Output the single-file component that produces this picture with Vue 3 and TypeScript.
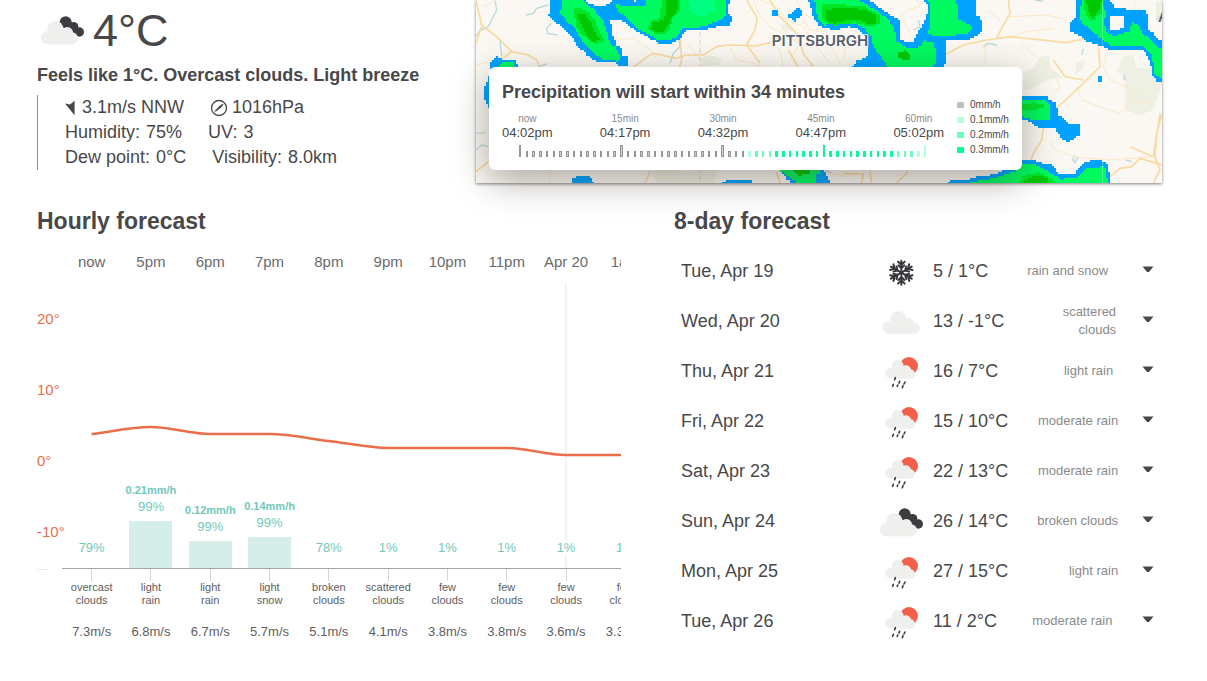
<script setup lang="ts">
type Point = [number, number]
type DayIcon = 'snow' | 'scattered' | 'rain' | 'broken'

interface Hour {
  label: string
  temp: number
  chance: string
  amount?: string
  bar?: number
  sky: [string, string]
  wind: string
}

interface Day {
  date: string
  icon: DayIcon
  temp: string
  sky: string
}

const hours: Hour[] = [
  { label: 'now', temp: 4, chance: '79%', sky: ['overcast', 'clouds'], wind: '7.3m/s' },
  { label: '5pm', temp: 5, chance: '99%', amount: '0.21mm/h', bar: 47, sky: ['light', 'rain'], wind: '6.8m/s' },
  { label: '6pm', temp: 4, chance: '99%', amount: '0.12mm/h', bar: 27, sky: ['light', 'rain'], wind: '6.7m/s' },
  { label: '7pm', temp: 4, chance: '99%', amount: '0.14mm/h', bar: 31, sky: ['light', 'snow'], wind: '5.7m/s' },
  { label: '8pm', temp: 3, chance: '78%', sky: ['broken', 'clouds'], wind: '5.1m/s' },
  { label: '9pm', temp: 2, chance: '1%', sky: ['scattered', 'clouds'], wind: '4.1m/s' },
  { label: '10pm', temp: 2, chance: '1%', sky: ['few', 'clouds'], wind: '3.8m/s' },
  { label: '11pm', temp: 2, chance: '1%', sky: ['few', 'clouds'], wind: '3.8m/s' },
  { label: 'Apr 20', temp: 1, chance: '1%', sky: ['few', 'clouds'], wind: '3.6m/s' },
  { label: '1am', temp: 1, chance: '1%', sky: ['few', 'clouds'], wind: '3.3m/s' },
]

const days: Day[] = [
  { date: 'Tue, Apr 19', icon: 'snow', temp: '5 / 1°C', sky: 'rain and snow' },
  { date: 'Wed, Apr 20', icon: 'scattered', temp: '13 / -1°C', sky: 'scattered clouds' },
  { date: 'Thu, Apr 21', icon: 'rain', temp: '16 / 7°C', sky: 'light rain' },
  { date: 'Fri, Apr 22', icon: 'rain', temp: '15 / 10°C', sky: 'moderate rain' },
  { date: 'Sat, Apr 23', icon: 'rain', temp: '22 / 13°C', sky: 'moderate rain' },
  { date: 'Sun, Apr 24', icon: 'broken', temp: '26 / 14°C', sky: 'broken clouds' },
  { date: 'Mon, Apr 25', icon: 'rain', temp: '27 / 15°C', sky: 'light rain' },
  { date: 'Tue, Apr 26', icon: 'rain', temp: '11 / 2°C', sky: 'moderate rain' },
]

const axis = ['20°', '10°', '0°', '-10°']

const marks = [
  { offset: 'now', time: '04:02pm' },
  { offset: '15min', time: '04:17pm' },
  { offset: '30min', time: '04:32pm' },
  { offset: '45min', time: '04:47pm' },
  { offset: '60min', time: '05:02pm' },
]

const legend = [
  { level: 'l0', text: '0mm/h' },
  { level: 'l1', text: '0.1mm/h' },
  { level: 'l2', text: '0.2mm/h' },
  { level: 'l3', text: '0.3mm/h' },
]

// Smooth temperature curve; the tangent is flat at plateaus and turning points.
const column = 60
const points: Point[] = hours.map((h, i) => [column * i + column / 2, 178 - h.temp * 7])
const slopes = points.map((p, i) => {
  const before = points[i - 1]
  const after = points[i + 1]
  if (!before) return (after[1] - p[1]) / column
  if (!after) return 0
  const a = (p[1] - before[1]) / column
  const b = (after[1] - p[1]) / column
  return a * b <= 0 ? 0 : (a + b) / 2
})
const curve = points
  .map((p, i) => {
    if (i === 0) return `M${p[0]},${p[1]}`
    const q = points[i - 1]
    const third = column / 3
    return `C${q[0] + third},${q[1] + slopes[i - 1] * third} ${p[0] - third},${p[1] - slopes[i] * third} ${p[0]},${p[1]}`
  })
  .join('')

// One bar a minute, laid out in runs of four that cover 27 units.
const bars = Array.from({ length: 61 }, (_, i) => {
  const tall = i % 15 === 0
  let level = 'l3'
  if (i < 34) level = 'l0'
  else if (i === 34 || i > 58) level = 'l1'
  else if (i < 38 || i > 55) level = 'l2'
  const width = i % 4 < 2 ? 2 : 3
  return {
    x: 17 + 27 * Math.floor(i / 4) + [0, 7, 13, 20][i % 4],
    y: tall ? 0 : 6,
    width,
    height: tall ? 12 : 6,
    level,
    hollow: i < 34 && width === 3,
  }
})

// Turns an outline into a stepped one, on the radar's square cells.
function cells(text: string): string {
  const size = 6
  const snap = (n: number) => Math.round(n / size) * size
  const pts = text.split(' ').map((s) => s.split(',').map(Number) as Point)
  let out = ''
  pts.forEach((p, i) => {
    const next = pts[(i + 1) % pts.length]
    const n = Math.max(1, Math.ceil(Math.max(Math.abs(next[0] - p[0]), Math.abs(next[1] - p[1])) / size))
    for (let k = 0; k < n; k++) {
      const x = snap(p[0] + ((next[0] - p[0]) * k) / n)
      const y = snap(p[1] + ((next[1] - p[1]) * k) / n)
      out += out ? `H${x}V${y}` : `M${x},${y}`
    }
  })
  return out + 'Z'
}

const west = [
  { tone: 'blue', d: '242,-6 240,30 236,45 245,62 270,75 285,95 305,110 315,130 330,148 345,160 365,180 385,185 415,185 445,190 445,197 472,197 472,170 455,165 455,145 440,130 428,100 422,58 440,58 465,70 490,90 510,100 540,118 565,130 600,130 625,118 645,92 700,90 745,78 780,75 785,45 775,35 778,-6 525,-6 500,4 465,-6 430,-6 428,8 410,18 385,20 360,10 345,-6' },
  { tone: 'green', d: '278,-6 272,40 290,68 315,85 325,110 345,135 370,160 395,178 420,180 445,187 450,165 440,145 420,125 410,90 400,60 380,35 365,22 335,-6' },
  { tone: 'green', d: '435,12 470,18 530,15 530,-6 765,-6 768,50 745,65 700,80 640,85 625,105 600,122 570,120 545,108 510,88 475,55 450,35' },
  { tone: 'mint', d: '650,-6 730,-6 735,30 700,50 670,40' },
  { tone: 'mid', d: '310,25 345,28 375,65 388,95 403,125 375,132 340,105 320,75' },
  { tone: 'dark', d: '320,42 340,42 365,72 372,95 388,120 372,126 350,105 338,75' },
  { tone: 'mid', d: '575,-6 633,-6 628,38 608,60 595,98 560,104 535,85 540,64 570,55' },
  { tone: 'dark', d: '590,-6 628,-6 620,35 605,52 588,92 565,98 542,85 545,68 578,60 590,40' },
  { tone: 'blue', d: '62,185 80,170 95,178 125,178 145,195 145,215 62,215' },
  { tone: 'green', d: '72,208 95,188 125,188 142,208' },
  { tone: 'blue', d: '60,228 52,235 50,260 44,262 44,300 50,305 52,325 60,325' },
  { tone: 'blue', d: '300,560 305,535 320,528 355,530 375,560' },
  { tone: 'blue', d: '750,560 755,545 780,537 840,537 848,560' },
  { tone: 'blue', d: '900,505 925,512 940,530 960,545 965,560 1090,560 1060,505' },
  { tone: 'green', d: '915,505 945,525 975,545 980,560 1056,560 1050,505' },
  { tone: 'dark', d: '965,505 1020,505 1020,520 990,528' },
  { tone: 'blue', d: '905,27 922,27 922,48 905,48' },
  { tone: 'blue', d: '955,42 970,35 980,22 995,30 998,50 975,63 955,50' },
].map((s) => ({ tone: s.tone, d: cells(s.d) }))

const east = [
  { tone: 'blue', d: '-38,-6 -25,30 -20,55 -5,75 10,85 50,90 85,80 110,85 140,115 145,145 140,172 110,185 95,210 370,210 375,185 375,120 440,120 470,108 485,90 485,60 470,40 470,-6 305,-6 325,20 318,60 300,90 280,125 240,122 238,60 215,45 165,12 140,-6' },
  { tone: 'green', d: '-18,-6 -12,30 -5,60 10,75 100,70 130,85 155,110 160,145 185,175 205,210 325,210 345,185 350,160 340,125 315,122 305,140 270,145 230,122 220,75 200,50 160,25 110,-6' },
  { tone: 'mid', d: '5,14 40,12 130,20 180,45 180,72 150,80 110,68 50,76 10,65' },
  { tone: 'dark', d: '18,30 40,24 130,28 165,48 170,68 150,74 120,60 80,62 50,70 20,60' },
  { tone: 'dark', d: '232,155 250,152 268,168 268,178 232,176' },
  { tone: 'green', d: '325,-6 332,40 330,90 318,98 335,108 400,105 440,100 458,85 450,72 415,55 410,-6' },
  { tone: 'blue', d: '770,-6 765,55 752,70 752,95 775,105 800,125 845,140 870,150 920,148 965,152 985,175 992,200 1000,235 1010,243 1032,243 1032,125 1005,110 1000,95 985,90 980,30 885,25 870,-6' },
  { tone: 'green', d: '785,-6 780,55 790,75 820,100 870,135 960,135 995,165 1005,225 1032,235 1032,150 1000,125 965,95 955,70 935,68 930,95 890,108 860,95 850,60 860,40 850,15 855,-6' },
  { tone: 'land', d: '870,45 915,45 912,85 885,92 870,88' },
  { tone: 'mid', d: '790,-6 855,-6 845,40 820,62 798,45' },
  { tone: 'dark', d: '797,-6 845,-6 840,30 820,52 805,30' },
  { tone: 'blue', d: '832,228 848,228 848,243 832,243' },
  { tone: 'blue', d: '590,288 680,290 685,300 710,310 712,345 735,368 780,375 778,405 750,425 725,415 705,385 660,382 630,365 590,350' },
  { tone: 'green', d: '590,298 675,302 690,315 690,360 645,362 590,340' },
  { tone: 'mid', d: '600,312 640,308 670,316 670,326 600,330' },
  { tone: 'blue', d: '382,560 382,543 440,540 470,530 530,522 560,505 580,478 640,480 665,490 690,490 715,520 760,520 785,490 820,478 850,485 865,495 870,560' },
  { tone: 'green', d: '440,560 450,545 500,540 580,515 606,490 650,495 690,520 720,538 770,532 800,505 845,500 860,515 862,560' },
  { tone: 'mid', d: '590,560 610,525 655,518 700,540 710,560' },
  { tone: 'dark', d: '605,560 612,540 640,528 680,532 685,560' },
  { tone: 'blue', d: '-10,520 5,525 12,545 15,560 -10,560' },
].map((s) => ({ tone: s.tone, d: cells(s.d) }))
</script>

<template>
  <main class="page">
    <section class="top">
      <div class="current">
        <div class="current-temp">
          <svg class="icon" viewBox="0 0 150 150" aria-hidden="true">
            <g class="cloud-dark">
              <circle cx="86" cy="55" r="18" />
              <circle cx="110" cy="68" r="14" />
              <circle cx="127" cy="84" r="14" />
              <path d="M84 46 104 56 120 70 134 90 122 97 94 90Z" />
            </g>
            <g class="cloud-light">
              <circle cx="55" cy="75" r="24" />
              <circle cx="32" cy="101" r="20" />
              <circle cx="91" cy="86" r="17" />
              <circle cx="105" cy="103" r="18" />
              <path d="M32 84H106V121H32Z" />
            </g>
          </svg>
          <h1>4°C</h1>
        </div>
        <p class="feels">Feels like 1°C. Overcast clouds. Light breeze</p>
        <div class="facts">
          <div class="fact-row">
            <span class="fact">
              <svg class="wind-icon" viewBox="0 0 13 16" aria-hidden="true"><path d="M0 3.5 5 4.6 9.6 .8V15.2Z" /></svg>
              3.1m/s NNW
            </span>
            <span class="fact">
              <svg class="gauge-icon" viewBox="0 0 18 18" aria-hidden="true">
                <circle cx="9" cy="9" r="7.5" />
                <path d="M4.2 12.4 9.6 6.8 12.6 4.8 13.4 5.6 11.2 8.6 6 12.6Z" />
              </svg>
              1016hPa
            </span>
          </div>
          <div class="fact-row">
            <span class="fact"><span class="term">Humidity:</span>75%</span>
            <span class="fact"><span class="term">UV:</span>3</span>
          </div>
          <div class="fact-row">
            <span class="fact"><span class="term">Dew point:</span>0°C</span>
            <span class="fact"><span class="term">Visibility:</span>8.0km</span>
          </div>
        </div>
      </div>

      <div class="map">
        <svg class="map-art" viewBox="0 0 686 183" preserveAspectRatio="xMidYMid slice" role="img" aria-label="Precipitation map around Pittsburgh">
          <rect class="land" width="686" height="183" />
          <g transform="translate(-6 0) scale(.33333)">
            <path class="wood" d="M690 175 720 165 755 175 750 195 700 197ZM540 515 590 505 650 515 740 510 735 549 560 549ZM930 75 960 70 970 90 940 95Z" />
            <path class="water" d="M75 0 80 30 60 70 50 85 30 90 18 110M235 15 200 25 190 40 168 45M245 70 230 85 232 100 262 105M205 200 230 192M625 110 630 140 610 160 600 190M18 400 45 398M18 450 35 435 55 440M90 120 95 170" />
            <path class="minor" d="M18 195 60 185 125 155M40 20 60 10 80 0M420 110 460 118 490 115 540 150 560 175M650 130 680 165 700 200M780 140 800 180 850 190 870 200M850 0 870 50 900 80 960 110 1000 150M1000 60 1020 90 1060 95M905 130 930 150 940 200M980 0 1000 40 1050 70 1080 110M870 0 920 20 950 60 1000 80 1040 140 1080 190M940 100 990 130 960 180M240 510 240 549M850 20 830 40" />
            <path class="major" d="M18 0 35 75 80 110 125 155 175 165 200 180 210 205M18 130 35 80M125 155 60 205M490 203 525 175 550 160 620 175 650 165 700 165 740 140 780 135 860 138 900 128M630 95 635 180 628 205M830 0 862 55 855 90 830 135 870 190M18 515 55 485M525 549 540 515M920 515 930 549M955 150 985 203M900 0 930 50 980 100 1000 160 1030 200" />
          </g>
          <g transform="translate(344 0) scale(.33333)">
            <path class="wood" d="M610 215 640 205 660 170 690 165 690 205 730 230 680 240 640 265 610 270ZM770 185 795 180 790 205 765 225ZM910 170 940 165 950 205 1026 205 1026 255 1000 330 960 345 915 330 915 230 890 215ZM1008 5 1026 0 1026 65 1008 55Z" />
            <path class="water" d="M490 140 505 130 530 135M645 0 670 4M785 165 790 145M915 225 910 235 918 238M765 465 758 480 765 488 775 470M918 480 935 485M295 60 300 80 280 90M15 510 35 520M1026 40 1010 60" />
            <path class="minor" d="M10 120 40 150 60 190M80 130 70 175 95 200M50 90 80 120 130 125M240 50 260 30 300 20 290 0M250 60 270 100M380 30 420 20 450 60M500 30 540 60M560 50 620 48 680 45 740 60M600 130 650 170 690 200 720 260 700 285M770 260 785 300 850 325 900 340 930 310 1000 305M860 155 850 200 870 240 940 270 1000 300M690 420 700 445 760 470 860 480 1000 470M560 115 620 95 700 85M30 520 80 530M495 130 495 190M940 0 950 20" />
            <path class="major" d="M565 0 570 40 545 85 530 115M378 163 430 135 500 120 570 110 650 118 740 128 810 112M835 140 840 200 790 250 720 315 690 345M700 180 735 230 790 240M670 385 665 420 640 460 630 490M870 530 900 505 935 500 960 475 1010 490 1026 495M930 440 1000 470 1020 340M1026 340 1010 400 1005 470 1020 510 1000 549M230 549 265 515M70 520 130 522 125 549M155 549 150 515" />
          </g>
          <path class="border-line" d="M224 0V183" />
          <g transform="translate(-6 0) scale(.33333)">
            <path v-for="(s, i) in west" :key="i" :class="s.tone" :d="s.d" />
          </g>
          <g transform="translate(344 0) scale(.33333)">
            <path v-for="(s, i) in east" :key="i" :class="s.tone" :d="s.d" />
          </g>
          <path class="seam" d="M626.500 0V183" />
          <text class="city" x="344" y="46" text-anchor="middle">PITTSBURGH</text>
          <text class="city" x="682" y="22">A</text>
        </svg>

        <div class="nowcast">
          <div class="nowcast-main">
            <h2>Precipitation will start within 34 minutes</h2>
            <ol class="marks">
              <li v-for="m in marks" :key="m.time">
                <small>{{ m.offset }}</small>
                <span>{{ m.time }}</span>
              </li>
            </ol>
            <svg class="bars" viewBox="0 0 442 12" aria-hidden="true">
              <g v-for="(b, i) in bars" :key="i">
                <rect :class="b.level" :x="b.x" :y="b.y" :width="b.width" :height="b.height" />
                <rect v-if="b.hollow" class="hollow" :x="b.x + 1" :y="b.y + 1" width="1" :height="b.height - 2" />
              </g>
            </svg>
          </div>
          <ul class="legend">
            <li v-for="l in legend" :key="l.text"><i :class="l.level"></i>{{ l.text }}</li>
          </ul>
        </div>
      </div>
    </section>

    <section class="forecasts">
      <div class="hourly">
        <h2>Hourly forecast</h2>
        <div class="chart">
          <div class="axis">
            <span v-for="a in axis" :key="a">{{ a }}</span>
          </div>
          <div class="strip">
            <div class="columns hour-names">
              <span v-for="h in hours" :key="h.label">{{ h.label }}</span>
            </div>
            <div class="plot">
              <svg class="curve" viewBox="0 0 600 284" preserveAspectRatio="none" aria-hidden="true">
                <path class="midnight" d="M510 0V284" />
                <path class="temperature" :d="curve" />
              </svg>
              <div class="columns rain">
                <div v-for="h in hours" :key="h.label" class="rain-cell" :class="{ wet: h.bar }">
                  <b v-if="h.amount">{{ h.amount }}</b>
                  <span>{{ h.chance }}</span>
                  <div v-if="h.bar" class="bar" :style="{ height: h.bar + 'px' }"></div>
                </div>
              </div>
            </div>
            <div class="columns sky">
              <span v-for="h in hours" :key="h.label">{{ h.sky[0] }}<br />{{ h.sky[1] }}</span>
            </div>
            <div class="columns wind">
              <span v-for="h in hours" :key="h.label">{{ h.wind }}</span>
            </div>
          </div>
        </div>
      </div>

      <div class="daily">
        <h2>8-day forecast</h2>
        <ul class="days">
          <li v-for="d in days" :key="d.date">
            <span>{{ d.date }}</span>
            <div class="values">
              <div class="day-temp">
                <svg class="icon" viewBox="0 0 150 150" aria-hidden="true">
                  <g v-if="d.icon === 'snow'" class="flake">
                    <g v-for="a in 6" :key="a" :transform="`rotate(${a * 60} 76 80)`">
                      <path d="M76 80V44M66 47 76 57 86 47M67 58 76 67 85 58" />
                    </g>
                  </g>
                  <g v-else-if="d.icon === 'scattered'" class="cloud-light">
                    <circle cx="67" cy="70" r="24" />
                    <circle cx="40" cy="94" r="20" />
                    <circle cx="97" cy="83" r="18" />
                    <circle cx="114" cy="97" r="17" />
                    <path d="M40 80H114V114H40Z" />
                  </g>
                  <template v-else-if="d.icon === 'broken'">
                    <g class="cloud-dark">
                      <circle cx="86" cy="55" r="18" />
                      <circle cx="110" cy="68" r="14" />
                      <circle cx="127" cy="84" r="14" />
                      <path d="M84 46 104 56 120 70 134 90 122 97 94 90Z" />
                    </g>
                    <g class="cloud-light">
                      <circle cx="55" cy="75" r="24" />
                      <circle cx="32" cy="101" r="20" />
                      <circle cx="91" cy="86" r="17" />
                      <circle cx="105" cy="103" r="18" />
                      <path d="M32 84H106V121H32Z" />
                    </g>
                  </template>
                  <template v-else>
                    <circle class="sun" cx="99" cy="60" r="27" />
                    <g class="cloud-light">
                      <circle cx="65" cy="60" r="18" />
                      <circle cx="44" cy="82" r="16" />
                      <circle cx="90" cy="73" r="15" />
                      <circle cx="103" cy="84" r="14" />
                      <path d="M44 68H104V98H44Z" />
                    </g>
                    <path class="drops" d="M58 95 56 101M71 106 69 111M87 108 84 114M52 115 50 121M65 117 64 121M81 119 79 125" />
                  </template>
                </svg>
                <span>{{ d.temp }}</span>
              </div>
              <span class="day-sky">{{ d.sky }}</span>
              <button type="button" class="toggle" :aria-label="'Details for ' + d.date">
                <svg viewBox="0 0 12 7" aria-hidden="true"><path d="M.5 .5H11.500L7 6H5Z" /></svg>
              </button>
            </div>
          </li>
        </ul>
      </div>
    </section>
  </main>
</template>

<style>
body {
  background: #fff;
}
</style>

<style scoped>
.page {
  box-sizing: border-box;
  padding: 0 45px 24px 37px;
  overflow: hidden;
  color: #48484a;
  font-family: "Liberation Sans", Arial, sans-serif;
  font-size: 18px;
}

h1,
h2,
p,
ul,
ol {
  margin: 0;
  padding: 0;
}

ul,
ol {
  list-style: none;
}

.icon {
  flex: none;
  width: 50px;
  height: 50px;
}

.top {
  display: grid;
  grid-template-columns: 32fr 50fr;
}

.current {
  padding: 4px 0 13px;
}

.current-temp {
  display: flex;
  align-items: center;
  gap: 6px;
  height: 50px;
}

h1 {
  padding-top: 4px;
  font-size: 45px;
  font-weight: 400;
  line-height: 50px;
}

.feels {
  margin: 9px 0 8px;
  line-height: 24px;
  font-weight: 700;
  white-space: nowrap;
}

.facts {
  padding-left: 27px;
  border-left: 1px solid #eb6e4b;
  line-height: 25px;
}

.fact-row {
  display: flex;
  gap: 26px;
}

.fact {
  display: flex;
  align-items: center;
  white-space: nowrap;
}

.term {
  margin-right: 6px;
}

.wind-icon {
  width: 13px;
  height: 16px;
  margin-right: 4px;
  fill: #48484a;
}

.gauge-icon {
  width: 18px;
  height: 18px;
  margin-right: 4px;
  fill: #48484a;
}

.gauge-icon circle {
  fill: none;
  stroke: #48484a;
  stroke-width: 1.3;
}

.map {
  position: relative;
  box-shadow: 0 1px 3px rgba(0, 0, 0, 0.5);
}

.map-art {
  position: absolute;
  inset: 0;
  width: 100%;
  height: 100%;
}

.land {
  fill: #fbf8f3;
}

.wood {
  fill: #eef0e3;
}

.water,
.minor,
.major {
  fill: none;
  stroke-linejoin: round;
}

.water {
  stroke: #b9dadd;
  stroke-width: 4;
}

.minor {
  stroke: #fbe8c4;
  stroke-width: 3;
}

.major {
  stroke: #f8dba0;
  stroke-width: 5;
}

.border-line {
  stroke: #e8cfd6;
  stroke-dasharray: 5 3;
}

.blue {
  fill: #00a2ff;
}

.green {
  fill: #00fa5f;
}

.mint {
  fill: #00ff80;
}

.mid {
  fill: #00e626;
}

.dark {
  fill: #00c800;
}

.seam {
  stroke: rgba(255, 255, 255, 0.3);
}

.city {
  fill: #555f6b;
  stroke: rgba(255, 255, 255, 0.8);
  stroke-width: 2px;
  paint-order: stroke;
  font-family: Inter, "Open Sans", sans-serif;
  font-size: 15px;
  font-weight: 600;
}

.nowcast {
  position: absolute;
  left: 13px;
  bottom: 13px;
  display: flex;
  align-items: flex-end;
  gap: 13px;
  box-sizing: border-box;
  padding: 13px;
  border-radius: 6px;
  background: #fff;
  box-shadow: 0 10px 36px rgba(50, 40, 30, 0.4);
}

.nowcast-main {
  width: 442px;
}

.nowcast h2 {
  line-height: 24px;
  font-size: 18px;
  white-space: nowrap;
}

.marks {
  display: flex;
  justify-content: space-between;
  margin-top: 8px;
}

.marks li {
  display: flex;
  flex-direction: column;
  align-items: center;
  font-size: 13px;
  line-height: 16px;
}

.marks small {
  color: #8a8a8a;
  font-size: 10px;
  line-height: 13px;
}

.bars {
  display: block;
  width: 442px;
  height: 12px;
  margin-top: 4px;
  shape-rendering: crispEdges;
}

.bars .l0 {
  fill: #959595;
}

.bars .l1 {
  fill: #b2ffde;
}

.bars .l2 {
  fill: #66ffbe;
}

.bars .l3 {
  fill: #00ff94;
}

.bars .hollow {
  fill: #cfcfcf;
}

.legend {
  font-size: 10px;
  line-height: 15px;
}

.legend li {
  display: flex;
  align-items: center;
  gap: 6px;
}

.legend i {
  width: 7px;
  height: 6px;
  border-radius: 1px;
}

.legend .l0 {
  background: #bfbfbf;
}

.legend .l1 {
  background: #b2ffde;
}

.legend .l2 {
  background: #66ffbe;
}

.legend .l3 {
  background: #00ff94;
}

.forecasts {
  display: grid;
  grid-template-columns: minmax(0, 146fr) minmax(0, 122fr);
  gap: 53px;
  margin-top: 24px;
}

.forecasts h2 {
  line-height: 28px;
  font-size: 23px;
}

.chart {
  display: flex;
  margin-top: 17px;
  overflow: hidden;
}

.axis {
  flex: none;
  display: flex;
  flex-direction: column;
  align-items: flex-start;
  width: 25px;
  padding-top: 31px;
  color: #eb6e4b;
  font-size: 15px;
  line-height: 71px;
}

.axis::after {
  content: "";
  width: 12px;
  margin-top: 2px;
  border-top: 1px solid #ececec;
}

.strip {
  flex: 1;
  margin-right: -34px;
}

.columns {
  display: grid;
  grid-template-columns: repeat(10, minmax(0, 1fr));
  text-align: center;
  white-space: nowrap;
}

.hour-names {
  color: #6a6a6c;
  font-size: 15px;
  line-height: 20px;
}

.plot {
  display: grid;
  height: 284px;
  margin-top: 12px;
  border-bottom: 1px solid #a5a5a5;
}

.curve,
.rain {
  grid-area: 1 / 1;
  width: 100%;
  height: 284px;
}

.curve path {
  fill: none;
  vector-effect: non-scaling-stroke;
}

.curve .midnight {
  stroke: #f2f2f2;
  stroke-width: 2;
}

.curve .temperature {
  stroke: #eb6e4b;
  stroke-width: 2.5;
}

.rain-cell {
  display: flex;
  flex-direction: column;
  align-items: center;
  justify-content: flex-end;
  color: #72c8ba;
  font-size: 13px;
  line-height: 16px;
}

.rain-cell b {
  font-size: 11px;
  line-height: 18px;
}

.rain-cell span {
  margin-bottom: 12px;
  background: #fff;
}

.rain-cell.wet span {
  margin-bottom: 6px;
}

.bar {
  width: 43px;
  background: #d5eeea;
}

.sky {
  color: #5e5e60;
  font-size: 11px;
  line-height: 13px;
}

.sky span::before {
  content: "";
  display: block;
  width: 1px;
  height: 12px;
  margin: 0 auto;
  background: #d6d6d6;
}

.wind {
  margin-top: 15px;
  color: #5e5e60;
  font-size: 13px;
  line-height: 20px;
}

.days {
  margin-top: 11px;
}

.days li {
  display: flex;
  align-items: center;
  justify-content: space-between;
  height: 50px;
  padding: 0 4px 0 7px;
}

.values {
  display: flex;
  align-items: center;
  justify-content: space-between;
  width: 282px;
}

.day-temp {
  display: flex;
  align-items: center;
  gap: 7px;
  white-space: nowrap;
}

.day-sky {
  width: 90px;
  color: #8a8a8a;
  font-size: 13px;
  line-height: 18px;
  text-align: right;
}

.toggle {
  display: flex;
  align-items: center;
  justify-content: center;
  width: 20px;
  height: 24px;
  margin-bottom: 3px;
  padding: 0;
  border: 0;
  background: none;
  cursor: pointer;
}

.toggle svg {
  width: 12px;
  height: 7px;
  fill: #48484a;
}

.cloud-light {
  fill: #efefed;
}

.cloud-dark {
  fill: #3c3d41;
}

.sun {
  fill: #f2604a;
}

.drops {
  fill: none;
  stroke: #3c3d41;
  stroke-width: 5;
  stroke-linecap: round;
}

.flake path {
  fill: none;
  stroke: #35363a;
  stroke-width: 6;
  stroke-linecap: round;
}
</style>
